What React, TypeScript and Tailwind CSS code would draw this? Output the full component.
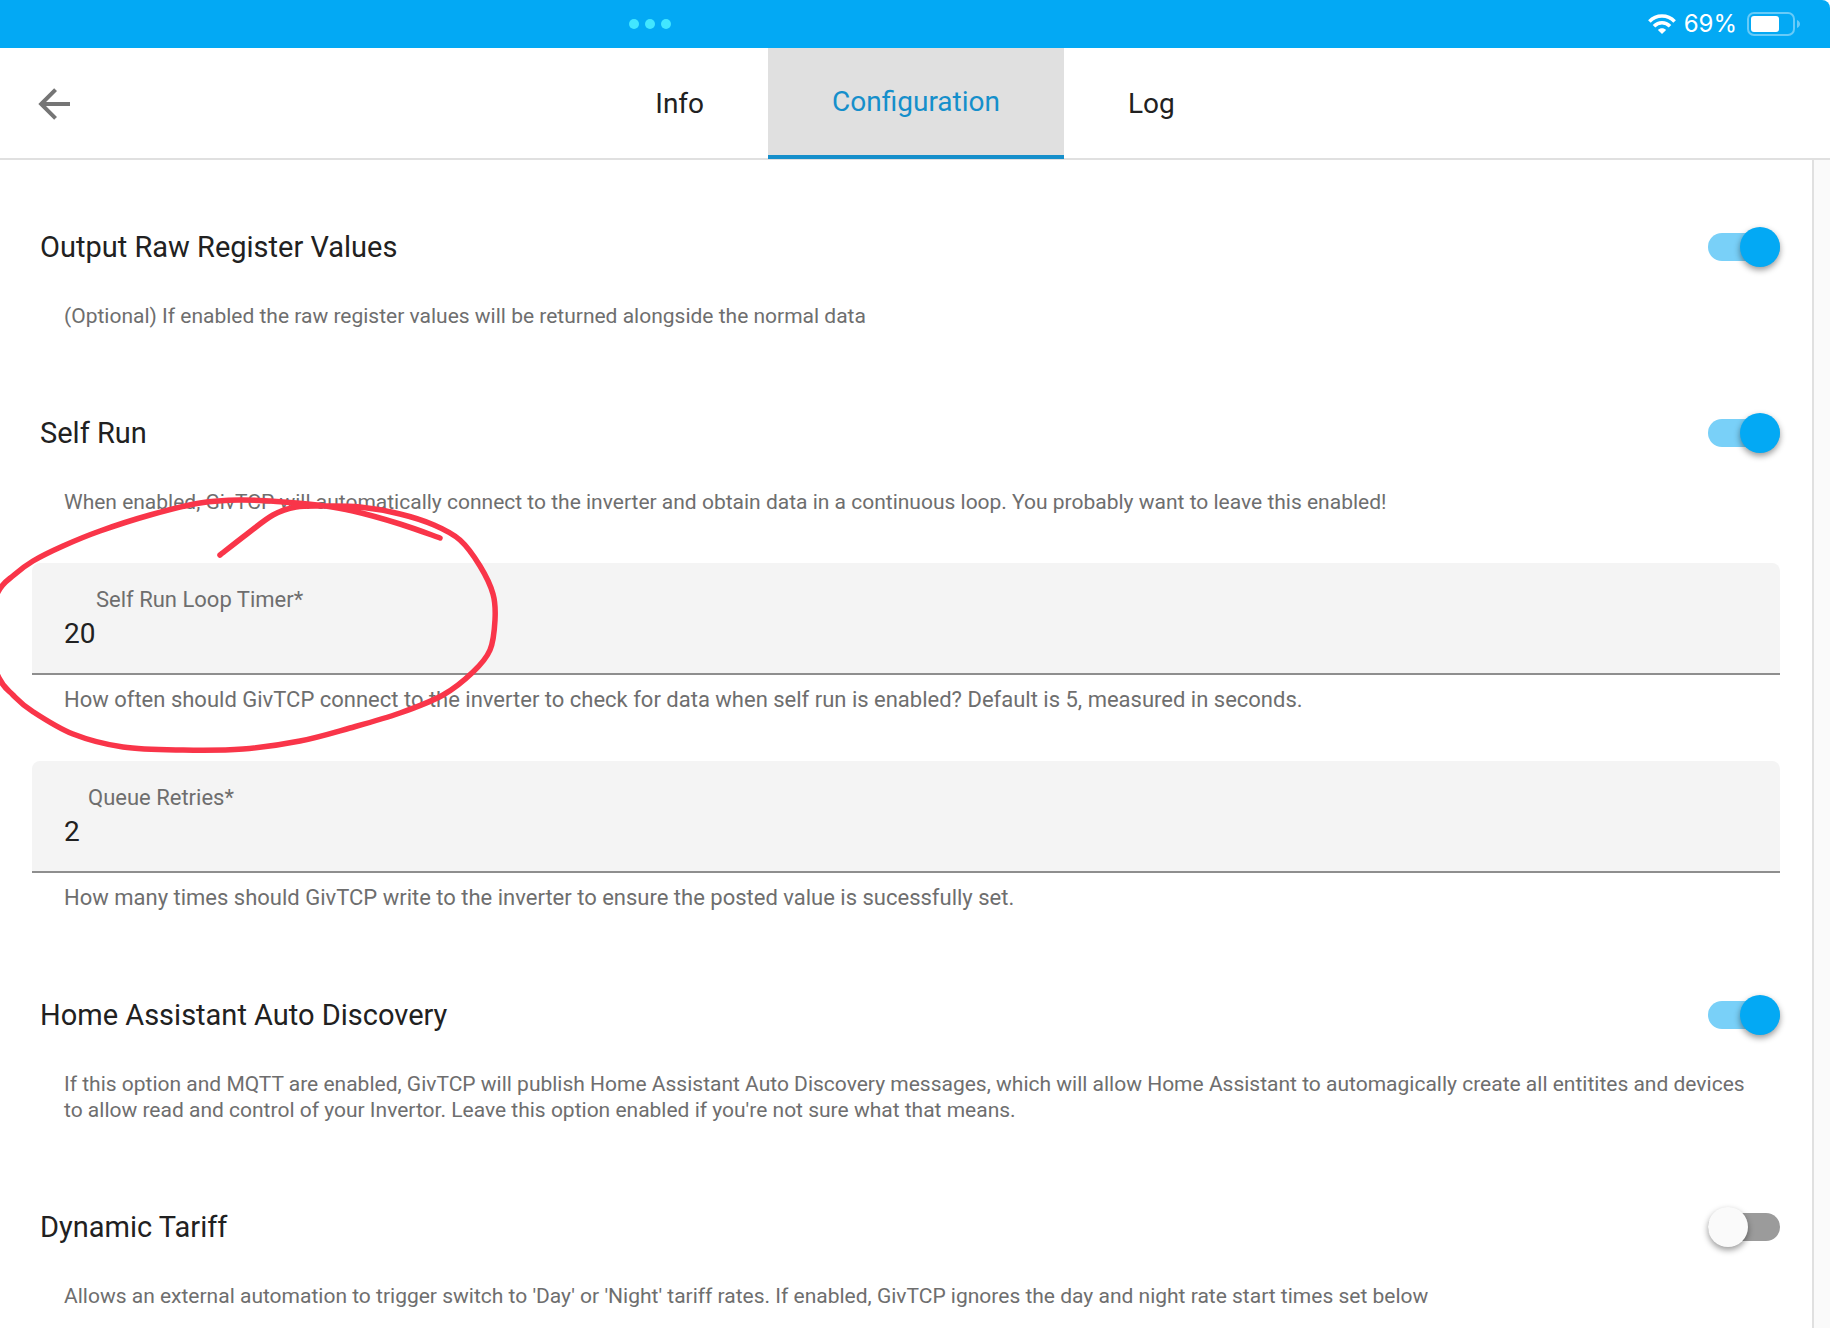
import { useState } from "react";
import clsx from "clsx";

const TABS = ["Info", "Configuration", "Log"] as const;

type Tab = typeof TABS[number];

export default function App() {
  const [tab, setTab] = useState<Tab>("Configuration");

  return (
    <div className="relative flex min-h-screen flex-col overflow-hidden bg-white font-[Roboto,sans-serif] text-[#212121]">
      <StatusBar />

      <header className="relative flex h-28 justify-center border-b-2 border-[#e0e0e0]">
        <button
          aria-label="Back"
          className="absolute left-0 top-0 flex h-28 items-center pl-[30px] text-[#757575]"
        >
          <BackIcon />
        </button>
        <div role="tablist" className="-mb-px flex">
          {TABS.map((t) => (
            <button
              key={t}
              role="tab"
              aria-selected={tab === t}
              onClick={() => setTab(t)}
              className={clsx(
                "px-16 text-[28px] leading-8",
                tab === t && "border-b-4 border-[#158fcb] bg-[#e0e0e0] text-[#158fcb]"
              )}
            >
              {t}
            </button>
          ))}
        </div>
      </header>

      <div className="flex flex-1">
        <main className="flex flex-1 flex-col gap-12 border-r-2 border-[#e0e0e0] px-8 pt-[31px]">
          <Setting
            id="raw-register"
            title="Output Raw Register Values"
            text="(Optional) If enabled the raw register values will be returned alongside the normal data"
            on
          />
          <Setting
            id="self-run"
            title="Self Run"
            text="When enabled, GivTCP will automatically connect to the inverter and obtain data in a continuous loop. You probably want to leave this enabled!"
            on
          />
          <Field
            id="loop-timer"
            label="Self Run Loop Timer*"
            labelClass="pl-8"
            value="20"
            help="How often should GivTCP connect to the inverter to check for data when self run is enabled? Default is 5, measured in seconds."
          />
          <Field
            id="queue-retries"
            label="Queue Retries*"
            labelClass="pl-6"
            value="2"
            help="How many times should GivTCP write to the inverter to ensure the posted value is sucessfully set."
          />
          <Setting
            id="auto-discovery"
            title="Home Assistant Auto Discovery"
            text="If this option and MQTT are enabled, GivTCP will publish Home Assistant Auto Discovery messages, which will allow Home Assistant to automagically create all entitites and devices to allow read and control of your Invertor. Leave this option enabled if you're not sure what that means."
            on
          />
          <Setting
            id="dynamic-tariff"
            title="Dynamic Tariff"
            text="Allows an external automation to trigger switch to 'Day' or 'Night' tariff rates. If enabled, GivTCP ignores the day and night rate start times set below"
          />
        </main>
        <div className="w-4 bg-[#fafafa]" />
      </div>

      <PenCircle />
    </div>
  );
}

// =====================================================================
// Building blocks
// =====================================================================

function StatusBar() {
  return (
    <div className="flex h-12 items-center justify-between rounded-tr-lg bg-[#03a9f4] text-white">
      <div className="flex w-[71%] justify-center gap-1.5">
        <span className="size-2.5 rounded-full bg-[#42e6ff]" />
        <span className="size-2.5 rounded-full bg-[#42e6ff]" />
        <span className="size-2.5 rounded-full bg-[#42e6ff]" />
      </div>
      <div className="flex items-center pr-[30px]">
        <WifiIcon />
        <span className="ml-2 mr-2.5 font-[Inter,sans-serif] text-2xl leading-6">69%</span>
        <BatteryIcon />
      </div>
    </div>
  );
}

function Setting({ id, title, text, on = false }: { id: string; title: string; text: string; on?: boolean }) {
  const [checked, setChecked] = useState(on);

  return (
    <section className="pt-7">
      <div className="flex h-14 items-center justify-between pl-2">
        <label htmlFor={id} className="text-[29px] leading-8">{title}</label>
        <input
          id={id}
          type="checkbox"
          role="switch"
          aria-describedby={`${id}-text`}
          checked={checked}
          onChange={(e) => setChecked(e.target.checked)}
          className="relative h-7 w-[72px] appearance-none rounded-full bg-[#9b9b9b] before:absolute before:-top-1.5 before:left-0 before:size-10 before:rounded-full before:bg-[#fafafa] before:shadow-[0_3px_6px_rgba(0,0,0,0.4)] checked:bg-[#79d0f8] checked:before:left-8 checked:before:bg-[#03a9f4]"
        />
      </div>
      <p id={`${id}-text`} className="mt-7 px-8 text-[21px] leading-[26px] text-[#6e6e6e]">{text}</p>
    </section>
  );
}

function Field({ id, label, labelClass, value, help }: { id: string; label: string; labelClass: string; value: string; help: string }) {
  const [v, setV] = useState(value);

  return (
    <div>
      <div className="rounded-t-lg border-b-2 border-[#8e8e8e] bg-[#f4f4f4] px-8 py-[23px]">
        <label htmlFor={id} className={clsx("mb-1 block text-[22px] leading-7 text-[#6e6e6e]", labelClass)}>
          {label}
        </label>
        <input
          id={id}
          inputMode="numeric"
          aria-describedby={`${id}-help`}
          value={v}
          onChange={(e) => setV(e.target.value)}
          className="block h-8 w-full bg-transparent text-[28px] leading-8 outline-none"
        />
      </div>
      <p id={`${id}-help`} className="mt-3 px-8 text-[22px] leading-[26px] text-[#6e6e6e]">{help}</p>
    </div>
  );
}

// =====================================================================
// Drawings
// =====================================================================

function BackIcon() {
  return (
    <svg viewBox="0 0 24 24" className="size-12" fill="currentColor">
      <path d="M20,11V13H8L13.5,18.5L12.08,19.92L4.16,12L12.08,4.08L13.5,5.5L8,11H20Z" />
    </svg>
  );
}

function WifiIcon() {
  return (
    <svg viewBox="0 0 28 20" className="h-5 w-7" fill="none" stroke="currentColor" strokeWidth="3.6">
      <path d="M1.4 7.4C8.4 .2 19.6 .2 26.6 7.4" />
      <path d="M6 12.2C10.6 7.6 17.4 7.6 22 12.2" />
      <path d="M14 20L9.9 15.9C12.2 13.6 15.8 13.6 18.1 15.9Z" fill="currentColor" stroke="none" />
    </svg>
  );
}

function BatteryIcon() {
  return (
    <svg viewBox="0 0 53 24" className="h-6 w-[53px]">
      <rect x="1" y="1" width="46" height="22" rx="6" fill="none" stroke="#68cbf8" strokeWidth="2" />
      <rect x="4" y="4" width="28" height="16" rx="3" fill="#fff" />
      <path d="M50 8C54 9.5 54 14.5 50 16Z" fill="#68cbf8" />
    </svg>
  );
}

const PEN_POINTS = [
  [440, 538], [400, 524], [353, 511], [317, 505], [283, 502], [240, 500], [200, 503],
  [150, 515], [100, 531], [63, 546], [33, 561], [14, 575], [-2, 592], [-16, 635],
  [-1, 678], [13, 695], [32, 711], [73, 734], [123, 747], [183, 750], [243, 749],
  [300, 741], [350, 728], [400, 713], [443, 695], [473, 672], [490, 650], [495, 620],
  [493, 594], [480, 566], [460, 540], [434, 525], [400, 514], [360, 507], [325, 506],
  [296, 507], [273, 515], [247, 534], [220, 555],
];

// Catmull-Rom through the points, written out as cubic segments
function smoothPath(pts: number[][]): string {
  let d = `M${pts[0][0]} ${pts[0][1]}`;
  for (let i = 0; i < pts.length - 1; i++) {
    const a = pts[i - 1] ?? pts[i];
    const b = pts[i];
    const c = pts[i + 1];
    const e = pts[i + 2] ?? c;
    d += `C${b[0] + (c[0] - a[0]) / 6} ${b[1] + (c[1] - a[1]) / 6} ${c[0] - (e[0] - b[0]) / 6} ${c[1] - (e[1] - b[1]) / 6} ${c[0]} ${c[1]}`;
  }
  return d;
}

/* Freehand pen stroke over the loop timer field */
function PenCircle() {
  return (
    <svg
      viewBox="0 0 520 780"
      className="pointer-events-none absolute left-0 top-0 h-[780px] w-[520px]"
      fill="none"
      stroke="#f93549"
      strokeWidth="5.5"
      strokeLinecap="round"
      strokeLinejoin="round"
    >
      <path d={smoothPath(PEN_POINTS)} />
    </svg>
  );
}
